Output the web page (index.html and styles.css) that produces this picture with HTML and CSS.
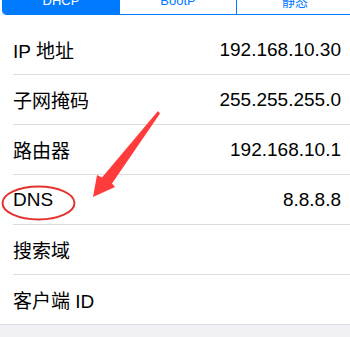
FILE: index.html
```html
<!DOCTYPE html>
<html lang="zh">
<head>
    <meta charset="UTF-8">
    <meta name="viewport" content="width=device-width, initial-scale=1.0">
    <title>IP 设置</title>
    <link rel="stylesheet" href="styles.css">
</head>
<body>
    <div class="page">
        <div class="seg-wrap">
            <div class="seg">
                <div class="seg-item active">DHCP</div>
                <div class="seg-item">BootP</div>
                <div class="seg-item">静态</div>
            </div>
        </div>

        <div class="list">
            <div class="row"><div class="row-inner"><span>IP 地址</span><span class="value">192.168.10.30</span></div></div>
            <div class="row"><div class="row-inner"><span>子网掩码</span><span class="value">255.255.255.0</span></div></div>
            <div class="row"><div class="row-inner"><span>路由器</span><span class="value">192.168.10.1</span></div></div>
            <div class="row"><div class="row-inner"><span>DNS</span><span class="value">8.8.8.8</span></div></div>
            <div class="row"><div class="row-inner"><span>搜索域</span><span class="value"></span></div></div>
            <div class="row"><div class="row-inner"><span>客户端 ID</span><span class="value"></span></div></div>
        </div>

        <div class="footer"></div>

        <!-- 标注 -->
        <svg class="mark" width="350" height="337" viewBox="0 0 350 337">
            <ellipse cx="38.5" cy="203" rx="36" ry="16.5" fill="none" stroke="#e4322f" stroke-width="2"/>
            <polygon points="158,111 160,113.5 112,183.5 115,187 93,197 97,175 102,177.5" fill="#ff3b3b"/>
        </svg>
    </div>
</body>
</html>
```

FILE: styles.css
```css
:root {
    --blue: #007aff;
    --line: #dcdce0;
    --grey: #efeff4;
}

* {
    margin: 0;
    padding: 0;
    box-sizing: border-box;
}

body {
    background: #fff;
    color: #000;
    font-family: 'Liberation Sans', 'Noto Sans CJK SC', sans-serif;
    overflow: hidden;
}

.page {
    position: relative;
    width: 350px;
    height: 337px;
    display: flex;
    flex-direction: column;
    overflow: hidden;
}

.seg-wrap {
    height: 15px;
    overflow: hidden;
    display: flex;
    align-items: flex-end;
    padding-left: 2px;
}

.seg {
    display: flex;
    flex-shrink: 0;
    width: 352px;
    height: 30px;
    border: 1px solid var(--blue);
    border-radius: 4px;
    overflow: hidden;
}

.seg-item {
    flex: 1;
    display: flex;
    align-items: center;
    justify-content: center;
    font-size: 13px;
    color: var(--blue);
    border-left: 1px solid var(--blue);
}

.seg-item:first-child {
    border-left: none;
}

.seg-item.active {
    background: var(--blue);
    color: #fff;
}

.list {
    margin-top: 10px;
    border-bottom: 1px solid var(--line);
}

.row {
    padding-left: 13px;
}

.row-inner {
    height: 50px;
    display: flex;
    align-items: center;
    justify-content: space-between;
    padding-right: 9px;
    font-size: 19px;
    border-bottom: 1px solid var(--line);
}

.row:last-child .row-inner {
    border-bottom: none;
    height: 49px;
}

.footer {
    flex: 1;
    background: var(--grey);
}

.mark {
    position: absolute;
    left: 0;
    top: 0;
    pointer-events: none;
}
```
